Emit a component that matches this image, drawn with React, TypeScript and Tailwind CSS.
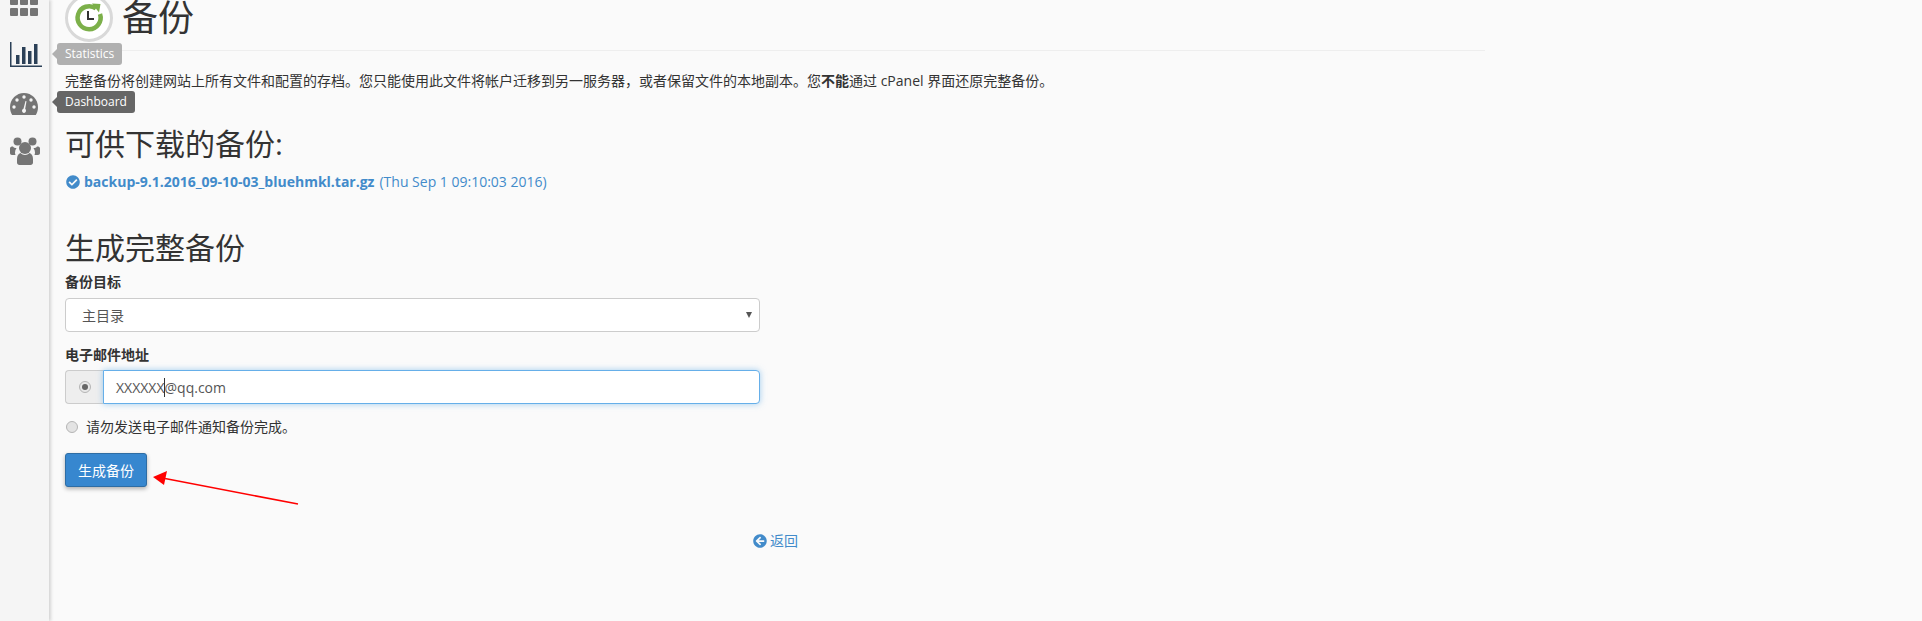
import { FaCheckCircle, FaArrowCircleLeft } from "react-icons/fa";

const font = "font-['Open_Sans','Noto_Sans_CJK_SC',sans-serif]";

function GridIcon() {
  return (
    <svg width="28" height="16" viewBox="0 0 28 16" className="fill-[#757575]">
      <rect x="0" y="-2" width="8" height="7" rx="1" />
      <rect x="10" y="-2" width="8" height="7" rx="1" />
      <rect x="20" y="-2" width="8" height="7" rx="1" />
      <rect x="0" y="8" width="8" height="8" rx="1" />
      <rect x="10" y="8" width="8" height="8" rx="1" />
      <rect x="20" y="8" width="8" height="8" rx="1" />
    </svg>
  );
}

function StatsIcon() {
  return (
    <svg width="32" height="25" viewBox="0 0 32 25" className="fill-[#2b4057]">
      <rect x="0" y="0" width="1.5" height="25" />
      <rect x="0" y="23.5" width="32" height="1.5" />
      <rect x="6" y="13" width="3.500" height="9" />
      <rect x="12" y="5" width="3.500" height="17" />
      <rect x="18" y="9" width="3.500" height="13" />
      <rect x="24" y="2" width="3.500" height="20" />
    </svg>
  );
}

function GaugeIcon() {
  return (
    <svg width="28" height="22" viewBox="0 0 28 22" className="fill-[#757575]">
      <path d="M14 0C6.3 0 0 6.3 0 14c0 3 .8 5.800 2.200 8h23.600c1.400-2.200 2.200-5 2.200-8C28 6.300 21.700 0 14 0z" />
      <g className="fill-[#f5f5f5]">
        <circle cx="14" cy="4" r="1.700" />
        <circle cx="7" cy="7" r="1.700" />
        <circle cx="21" cy="7" r="1.700" />
        <circle cx="4" cy="14" r="1.700" />
        <circle cx="24" cy="14" r="1.700" />
        <path d="M15.500 8l1 .3-1.300 7.500a2.500 2.500 0 0 1 .8 2c0 1.200-.9 2.200-2 2.200s-2-1-2-2.200c0-1 .7-1.900 1.500-2.100z" />
      </g>
    </svg>
  );
}

function UsersIcon() {
  return (
    <svg width="30" height="28" viewBox="0 0 30 28" className="fill-[#757575]">
      <circle cx="7.500" cy="4.500" r="4" />
      <circle cx="22.500" cy="4.500" r="4" />
      <path d="M0 11.500C0 10 1.200 9.500 3 9.500c.6 1 2 1.500 3.500 1.500-1 1.500-1.500 3-1.500 4.500 0 1 .2 1.800.5 2.500H2c-1.200 0-2-.8-2-2z" />
      <path d="M30 11.500c0-1.500-1.200-2-3-2-.6 1-2 1.500-3.500 1.500 1 1.500 1.500 3 1.500 4.500 0 1-.2 1.800-.5 2.500H28c1.200 0 2-.8 2-2z" />
      <circle cx="15" cy="11" r="6" />
      <path d="M7 22c0-3 1.500-5.500 3.500-6 1.200 1.200 2.800 2 4.500 2s3.300-.8 4.500-2c2 .5 3.500 3 3.500 6v3.500c0 1.500-1 2.500-2.500 2.500h-11C8 28 7 27 7 25.500z" />
    </svg>
  );
}

function BackupLogo() {
  return (
    <svg width="48" height="48" viewBox="0 0 48 48" className="shrink-0">
      <circle cx="24" cy="24" r="22.500" fill="#fff" stroke="#d9d9d9" strokeWidth="3" />
      <path d="M31 14.500A11.500 11.500 0 1 0 35 20" fill="none" stroke="#7cb04a" strokeWidth="4.500" />
      <path d="M27 9.500l8.500 .5-1.500 8.500z" fill="#7cb04a" />
      <path d="M23 17v8h6" fill="none" stroke="#333" strokeWidth="2" />
    </svg>
  );
}

function Tip({ text, dark }: { text: string; dark?: boolean }) {
  return (
    <div className={`absolute left-[57px] h-[22px] rounded-[3px] px-2 text-[12px] leading-[22px] text-white ${dark ? "top-[91px] bg-[#666666]" : "top-[43px] bg-[#b0b0b0]"}`}>
      <span className={`absolute left-[-5px] top-[6px] h-0 w-0 border-y-[5px] border-r-[5px] border-y-transparent ${dark ? "border-r-[#666666]" : "border-r-[#b0b0b0]"}`} />
      {text}
    </div>
  );
}

export default function App() {
  return (
    <div className={`relative flex h-[621px] w-[1922px] overflow-hidden bg-[#fafafa] text-[#333333] ${font}`}>
      <aside className="flex w-[49px] shrink-0 flex-col items-start gap-[26px] bg-[#f5f5f5] pl-[10px] shadow-[2px_0_3px_#d4d4d4]">
        <GridIcon />
        <StatsIcon />
        <GaugeIcon />
        <div className="mt-[-4px]">
          <UsersIcon />
        </div>
      </aside>

      <Tip text="Statistics" />
      <Tip text="Dashboard" dark />

      <main className="w-[1436px] pl-[16px]">
        <div className="box-content -mt-[6px] flex h-[56px] items-start gap-[9px] border-b border-[#eeeeee]">
          <BackupLogo />
          <h1 className="text-[36px] leading-[48px]">备份</h1>
        </div>
        <p className="mt-[20px] text-[14px] leading-[20px]">
          完整备份将创建网站上所有文件和配置的存档。您只能使用此文件将帐户迁移到另一服务器，或者保留文件的本地副本。您<b>不能</b>通过 cPanel 界面还原完整备份。
        </p>

        <h2 className="mt-[31px] text-[30px] leading-[44px]">可供下载的备份:</h2>
        <div className="mt-[6px] flex items-center text-[14px] leading-[20px] text-[#428bca]">
          <FaCheckCircle className="mr-[4px] ml-[1px] text-[14px]" />
          <b>backup-9.1.2016_09-10-03_bluehmkl.tar.gz</b>
          <span className="ml-[5px]">(Thu Sep 1 09:10:03 2016)</span>
        </div>

        <h2 className="mt-[36px] text-[30px] leading-[40px]">生成完整备份</h2>
        <div className="mt-[4px] text-[14px] font-bold leading-[20px]">备份目标</div>
        <div className="relative mt-[6px] flex h-[34px] w-[695px] items-center rounded border border-[#cccccc] bg-white pl-[16px] text-[14px] text-[#555555]">
          主目录
          <span className="absolute right-[7px] top-[13px] h-0 w-0 border-x-[3px] border-t-[6px] border-x-transparent border-t-[#555555]" />
        </div>

        <div className="mt-[13px] text-[14px] font-bold leading-[20px]">电子邮件地址</div>
        <div className="mt-[5px] flex h-[34px] w-[695px]">
          <div className="flex w-[38px] shrink-0 items-center justify-center rounded-l border border-r-0 border-[#cccccc] bg-[#eeeeee]">
            <span className="flex h-[12px] w-[12px] items-center justify-center rounded-full border border-[#b5b5b5] bg-[#e8e8e8]">
              <span className="h-[6px] w-[6px] rounded-full bg-[#666666]" />
            </span>
          </div>
          <div className="flex flex-1 items-center rounded-r border border-[#66afe9] bg-white pl-[12px] text-[14px] text-[#555555] shadow-[0_0_6px_rgba(102,175,233,0.6)]">
            XXXXXX<span className="ml-[-0.5px] mr-[-0.5px] h-[19px] w-px bg-[#333333]" />@qq.com
          </div>
        </div>

        <div className="mt-[13px] flex items-center text-[14px] leading-[20px]">
          <span className="mr-[8px] ml-[1px] h-[12px] w-[12px] rounded-full border border-[#b5b5b5] bg-[#e3e3e3]" />
          请勿发送电子邮件通知备份完成。
        </div>

        <button className="mt-[16px] h-[34px] w-[82px] rounded-[3px] border border-[#2e6da4] bg-[#3787cf] text-[14px] text-white shadow-[0_2px_4px_rgba(0,0,0,0.3)]">
          生成备份
        </button>

        <div className="mt-[44px] ml-[688px] flex items-center text-[14px] leading-[20px] text-[#428bca]">
          <FaArrowCircleLeft className="mr-[3px] shrink-0 text-[14px]" />
          返回
        </div>
      </main>

      <svg width="160" height="40" viewBox="0 0 160 40" className="absolute left-[150px] top-[470px]">
        <path d="M148 34L15 8.500" stroke="#ff0000" strokeWidth="1.600" fill="none" />
        <path d="M3 7l14-6-3 14z" fill="#ff0000" />
      </svg>
    </div>
  );
}
